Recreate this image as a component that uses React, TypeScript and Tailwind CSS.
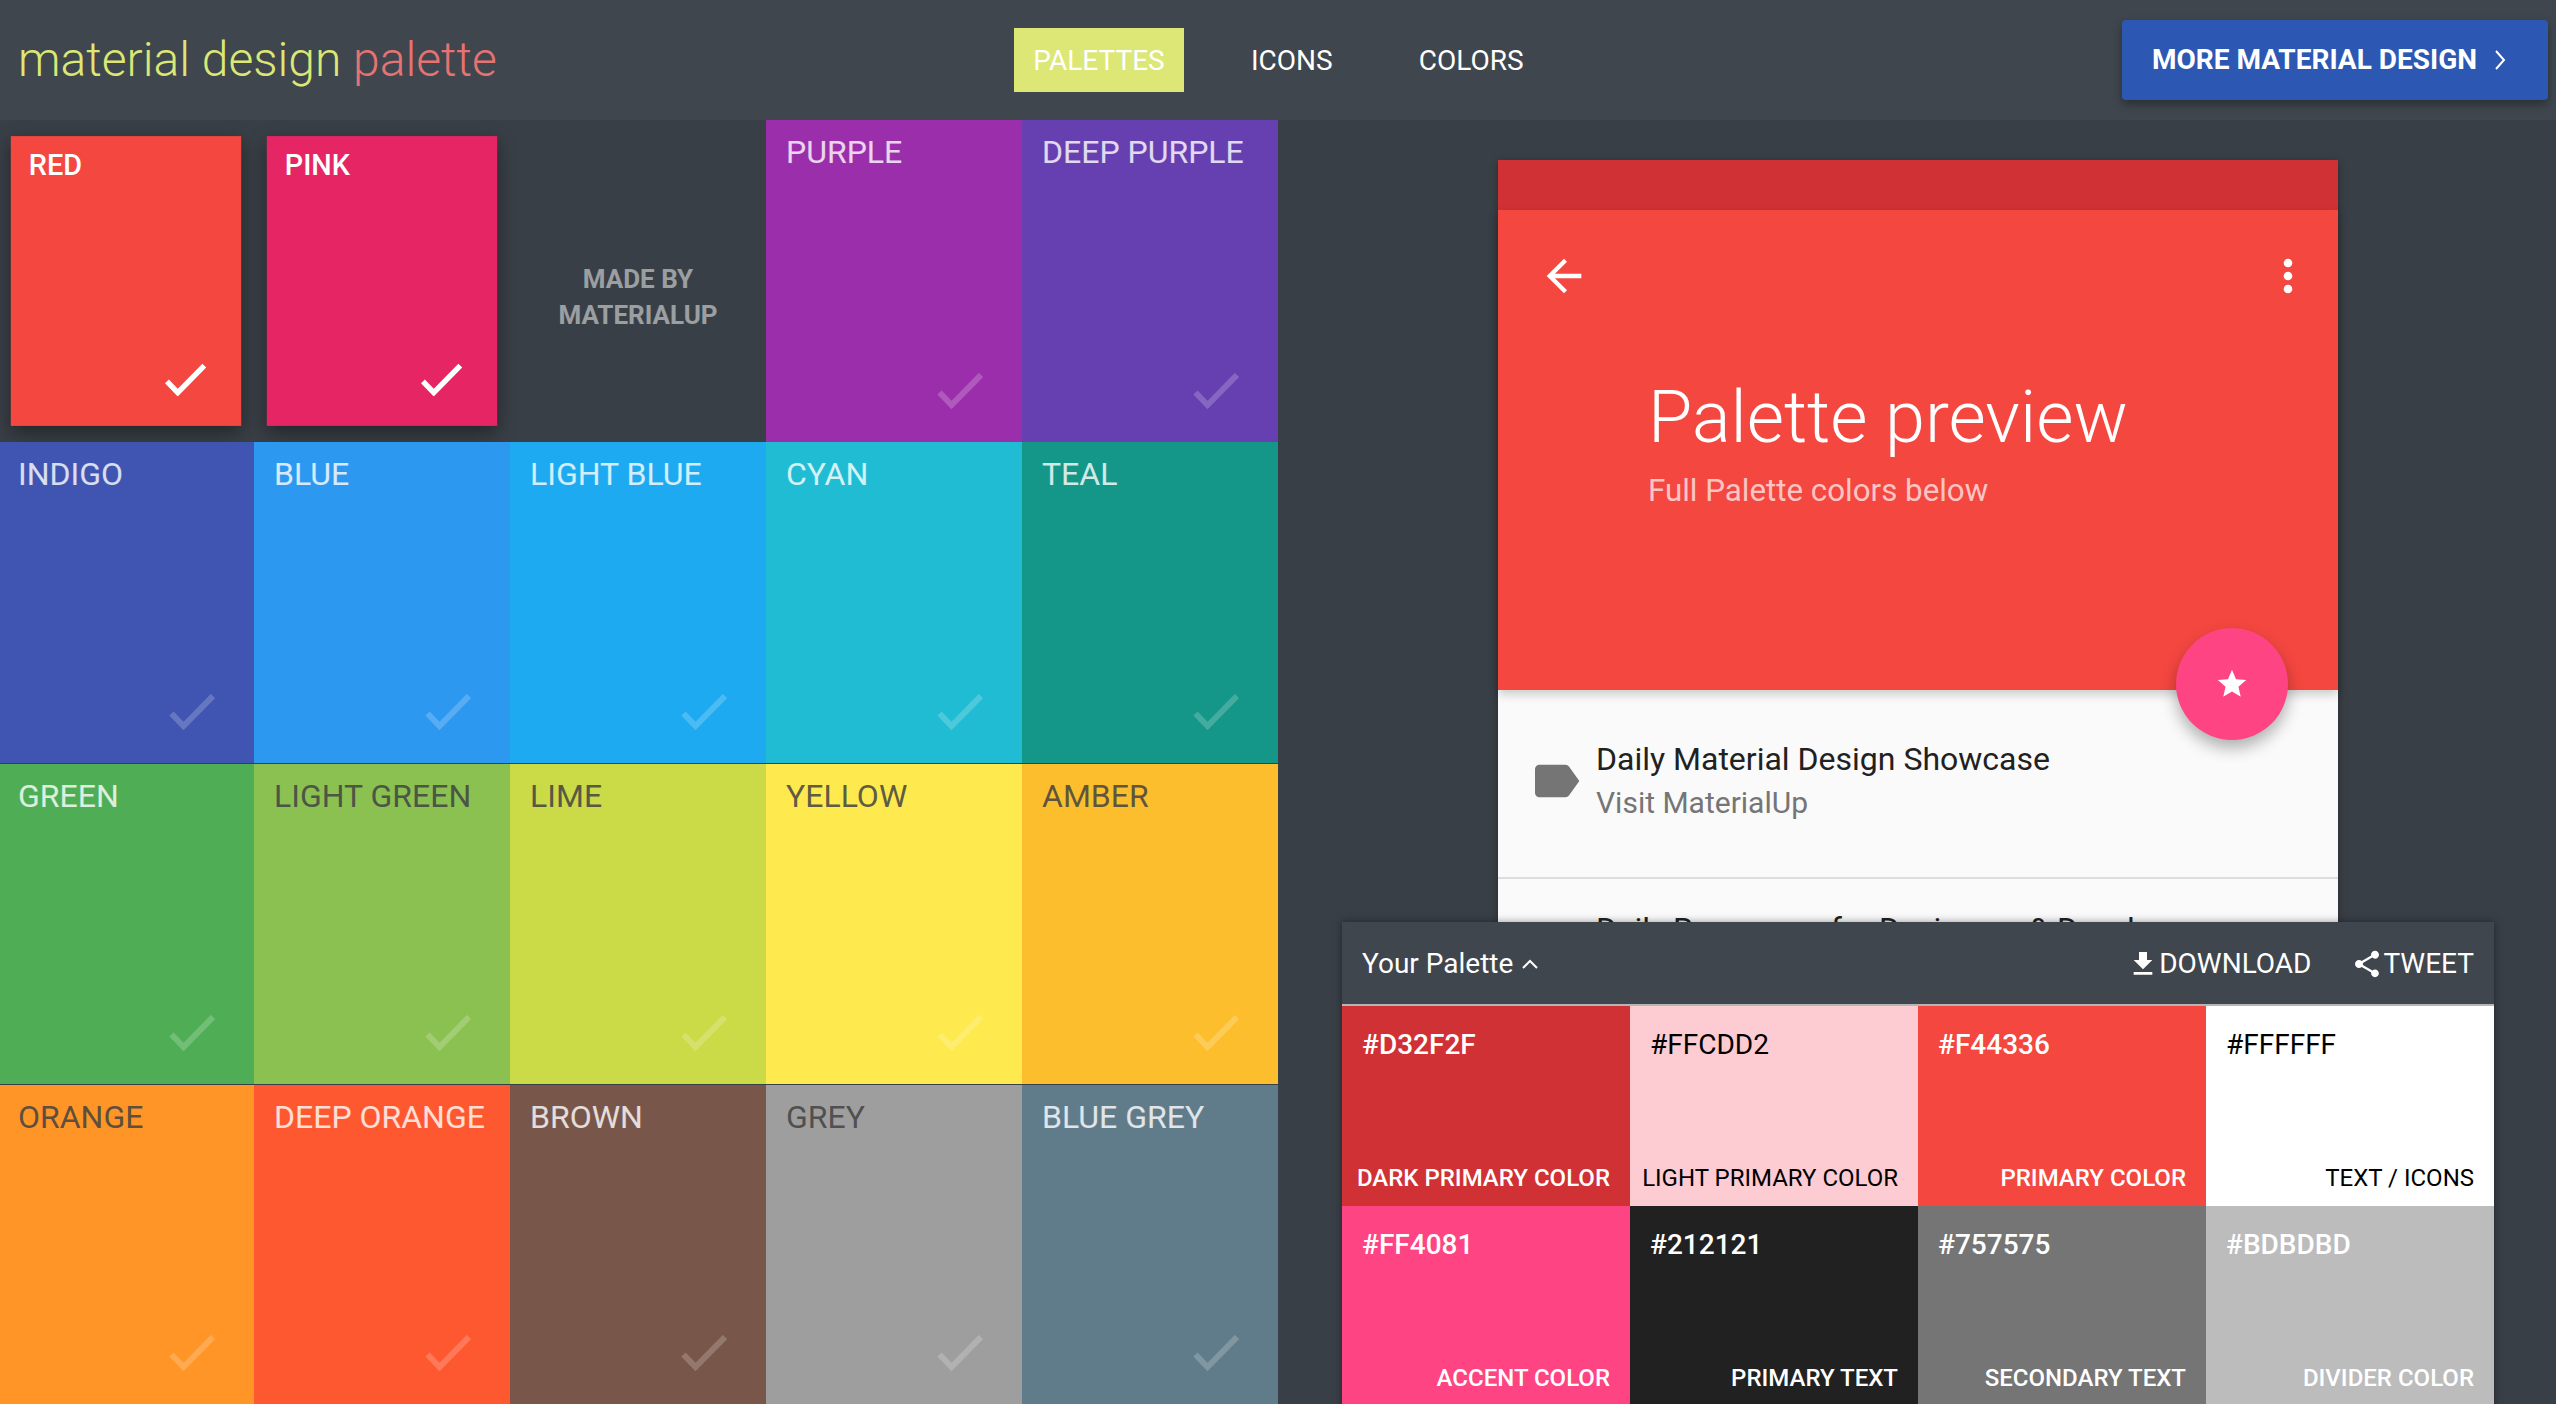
const dark = "text-[#424242]/85";

const swatches = [
  { name: "RED", bg: "bg-[#f44740]", text: "text-white", selected: true },
  { name: "PINK", bg: "bg-[#e62565]", text: "text-white", selected: true },
  { name: "MADE", bg: "", text: "" },
  { name: "PURPLE", bg: "bg-[#9b2fab]", text: "text-white/80" },
  { name: "DEEP PURPLE", bg: "bg-[#663fb1]", text: "text-white/80" },
  { name: "INDIGO", bg: "bg-[#4055b2]", text: "text-white/80" },
  { name: "BLUE", bg: "bg-[#2d98f0]", text: "text-white/80" },
  { name: "LIGHT BLUE", bg: "bg-[#1eaaf1]", text: "text-white/80" },
  { name: "CYAN", bg: "bg-[#20bcd3]", text: "text-white/80" },
  { name: "TEAL", bg: "bg-[#149688]", text: "text-white/80" },
  { name: "GREEN", bg: "bg-[#4fae55]", text: "text-white/80" },
  { name: "LIGHT GREEN", bg: "bg-[#8bc151]", text: dark },
  { name: "LIME", bg: "bg-[#cbda47]", text: dark },
  { name: "YELLOW", bg: "bg-[#fee94e]", text: dark },
  { name: "AMBER", bg: "bg-[#fdbe2d]", text: dark },
  { name: "ORANGE", bg: "bg-[#fe9526]", text: dark },
  { name: "DEEP ORANGE", bg: "bg-[#fe5830]", text: "text-white/80" },
  { name: "BROWN", bg: "bg-[#79564a]", text: "text-white/80" },
  { name: "GREY", bg: "bg-[#9e9e9e]", text: dark },
  { name: "BLUE GREY", bg: "bg-[#607c8a]", text: "text-white/80" },
];

const paletteCells = [
  { hex: "#D32F2F", label: "DARK PRIMARY COLOR", bg: "bg-[#d03135]", text: "text-white font-medium" },
  { hex: "#FFCDD2", label: "LIGHT PRIMARY COLOR", bg: "bg-[#fdcbd2]", text: "text-black" },
  { hex: "#F44336", label: "PRIMARY COLOR", bg: "bg-[#f44740]", text: "text-white font-medium" },
  { hex: "#FFFFFF", label: "TEXT / ICONS", bg: "bg-white", text: "text-black" },
  { hex: "#FF4081", label: "ACCENT COLOR", bg: "bg-[#fe4482]", text: "text-white font-medium" },
  { hex: "#212121", label: "PRIMARY TEXT", bg: "bg-[#212121]", text: "text-white font-medium" },
  { hex: "#757575", label: "SECONDARY TEXT", bg: "bg-[#757575]", text: "text-white font-medium" },
  { hex: "#BDBDBD", label: "DIVIDER COLOR", bg: "bg-[#bbbcbb]", text: "text-white font-medium" },
];

function Check({ faded }: { faded: boolean }) {
  return (
    <svg viewBox="0 0 46 36" className={`absolute right-[39px] bottom-[33px] w-[46px] h-[36px] ${faded ? "opacity-20" : ""}`}>
      <path d="M2.5 19.5 L14.5 32 L44 2" fill="none" stroke="white" strokeWidth="6" />
    </svg>
  );
}

type SwatchProps = { name: string; bg: string; text: string; selected?: boolean; index: number };

function Swatch({ name, bg, text, selected, index }: SwatchProps) {
  if (name === "MADE") {
    return (
      <div className="flex items-center justify-center pt-[32px] text-center text-[26px] leading-[36px] font-bold text-white/50">
        <div>
          MADE BY
          <br />
          MATERIALUP
        </div>
      </div>
    );
  }
  // the two middle rows leave a hairline of page colour under them
  const hairline = index >= 5 && index < 15 ? "border-b border-[#393f46]" : "";
  const firstCol = index % 5 === 0 && index > 0;
  return (
    <div className={`relative ${bg} ${hairline} ${index === 0 ? "-ml-[2px]" : ""} ${selected ? "scale-90 shadow-[0_8px_20px_rgba(0,0,0,0.4)]" : ""}`}>
      <div className={`${firstCol ? "pl-[18px]" : "pl-[20px]"} pt-[13px] text-[32px] leading-[38px] ${selected ? "font-medium" : ""} ${text}`}>{name}</div>
      <Check faded={!selected} />
    </div>
  );
}

export default function App() {
  return (
    <div className="h-[1404px] w-[2556px] overflow-hidden bg-[#393f46] font-['Roboto',sans-serif]">
      <header className="flex h-[120px] items-center bg-[#3f464d]">
        <div className="w-[1014px] pl-[18px] text-[48px] font-light text-[#dce775]">
          material design <span className="text-[#e57373]">palette</span>
        </div>
        <nav className="flex items-center text-[28px] text-white">
          <a className="flex h-[64px] w-[170px] items-center justify-center bg-[#dce775] pt-[2px]">PALETTES</a>
          <a className="ml-[67px] pt-[2px]">ICONS</a>
          <a className="ml-[86px] pt-[2px]">COLORS</a>
        </nav>
        <a className="ml-auto mr-[8px] flex h-[80px] w-[426px] items-center rounded-[4px] bg-[#2c58b4] pl-[30px] text-[28px] font-bold text-white shadow-[0_4px_10px_rgba(0,0,0,0.35)]">
          MORE MATERIAL DESIGN
          <svg viewBox="0 0 12 20" className="ml-[17px] h-[20px] w-[12px]">
            <path d="M2 1 L10 10 L2 19" fill="none" stroke="white" strokeWidth="2" />
          </svg>
        </a>
      </header>

      <main className="flex h-[1284px]">
        <div className="grid w-[1278px] grid-cols-[254px_256px_256px_256px_256px] grid-rows-[322px_322px_321px_319px]">
          {swatches.map((s, i) => (
            <Swatch key={s.name} index={i} {...s} />
          ))}
        </div>

        <div className="relative flex-1">
          <div className="ml-[220px] mt-[40px] h-[1244px] w-[840px] bg-[#fafafa] shadow-[0_2px_8px_rgba(0,0,0,0.3)]">
            <div className="h-[50px] bg-[#d03135]" />
            <div className="relative h-[480px] bg-[#f44740] shadow-[0_4px_10px_rgba(0,0,0,0.2)]">
              <div className="flex justify-between pl-[40px] pr-[24px] pt-[40px]">
                <svg viewBox="0 0 24 24" className="h-[52px] w-[52px]" fill="white">
                  <path d="M20 11H7.83l5.59-5.59L12 4l-8 8 8 8 1.41-1.41L7.83 13H20v-2z" />
                </svg>
                <svg viewBox="0 0 24 24" className="h-[52px] w-[52px]" fill="white">
                  <path d="M12 8c1.1 0 2-.9 2-2s-.9-2-2-2-2 .9-2 2 .9 2 2 2zm0 2c-1.1 0-2 .9-2 2s.9 2 2 2 2-.9 2-2-.9-2-2-2zm0 6c-1.1 0-2 .9-2 2s.9 2 2 2 2-.9 2-2-.9-2-2-2z" />
                </svg>
              </div>
              <div className="pl-[150px] pt-[68px]">
                <div className="text-[72px] leading-[96px] font-light text-white">Palette preview</div>
                <div className="mt-[5px] text-[31.3px] leading-[40px] text-white/70">Full Palette colors below</div>
              </div>
              <div className="absolute bottom-[-50px] right-[50px] flex h-[112px] w-[112px] items-center justify-center rounded-full bg-[#fe4482] shadow-[0_8px_16px_rgba(0,0,0,0.3)]">
                <svg viewBox="0 0 24 24" className="h-[34px] w-[34px]" fill="white">
                  <path d="M12 17.27L18.18 21l-1.64-7.03L22 9.24l-7.19-.61L12 2 9.19 8.63 2 9.24l5.46 4.73L5.82 21z" />
                </svg>
              </div>
            </div>
            <div className="flex h-[189px] items-center border-b-2 border-[#dddddd] pb-[6px]">
              <svg viewBox="0 0 24 24" className="ml-[30px] h-[56px] w-[56px]" fill="#757575">
                <path d="M17.63 5.84C17.27 5.33 16.67 5 16 5L5 5.01C3.9 5.01 3 5.9 3 7v10c0 1.1.9 1.99 2 1.99L16 19c.67 0 1.27-.33 1.63-.84L22 12l-4.37-6.16z" />
              </svg>
              <div className="ml-[12px]">
                <div className="text-[32px] leading-[42px] text-[#212121]">Daily Material Design Showcase</div>
                <div className="mt-[2px] text-[30px] leading-[42px] text-[#757575]">Visit MaterialUp</div>
              </div>
            </div>
            <div className="pl-[98px] pt-[29px] text-[32px] leading-[42px] text-[#212121]">Daily Resources for Designers &amp; Developers</div>
          </div>

          <div className="absolute bottom-[-2px] left-[64px] w-[1152px] bg-[#3f464d] shadow-[0_0_8px_rgba(0,0,0,0.4)]">
            <div className="flex h-[84px] items-center border-b-2 border-[#b5b5b5] pl-[20px] pr-[20px] pt-[2px] text-[28px] text-white">
              <span>Your Palette</span>
              <svg viewBox="0 0 16 10" className="ml-[9px] h-[10px] w-[16px]">
                <path d="M1 9 L8 2 L15 9" fill="none" stroke="white" strokeWidth="2" />
              </svg>
              <svg viewBox="0 0 24 24" className="ml-auto h-[32px] w-[32px]" fill="white">
                <path d="M19 9h-4V3H9v6H5l7 7 7-7zM5 18v2h14v-2H5z" />
              </svg>
              <span>DOWNLOAD</span>
              <svg viewBox="0 0 24 24" className="ml-[40px] h-[32px] w-[32px]" fill="white">
                <path d="M18 16.08c-.76 0-1.44.3-1.96.77L8.91 12.7c.05-.23.09-.46.09-.7s-.04-.47-.09-.7l7.05-4.11c.54.5 1.25.81 2.04.81 1.66 0 3-1.34 3-3s-1.34-3-3-3-3 1.34-3 3c0 .24.04.47.09.7L8.04 9.81C7.5 9.31 6.79 9 6 9c-1.66 0-3 1.34-3 3s1.34 3 3 3c.79 0 1.5-.31 2.04-.81l7.12 4.16c-.05.21-.08.43-.08.65 0 1.61 1.31 2.92 2.92 2.92 1.61 0 2.92-1.31 2.92-2.92s-1.31-2.92-2.92-2.92z" />
              </svg>
              <span>TWEET</span>
            </div>
            <div className="grid grid-cols-4">
              {paletteCells.map((c) => (
                <div key={c.hex} className={`flex h-[200px] flex-col justify-between pb-[10px] pt-[17px] pl-[20px] pr-[20px] ${c.bg} ${c.text}`}>
                  <div className="text-[28px] leading-[44px]">{c.hex}</div>
                  <div className="-ml-[10px] whitespace-nowrap text-right text-[24px] leading-[36px]">{c.label}</div>
                </div>
              ))}
            </div>
          </div>
        </div>
      </main>
    </div>
  );
}
